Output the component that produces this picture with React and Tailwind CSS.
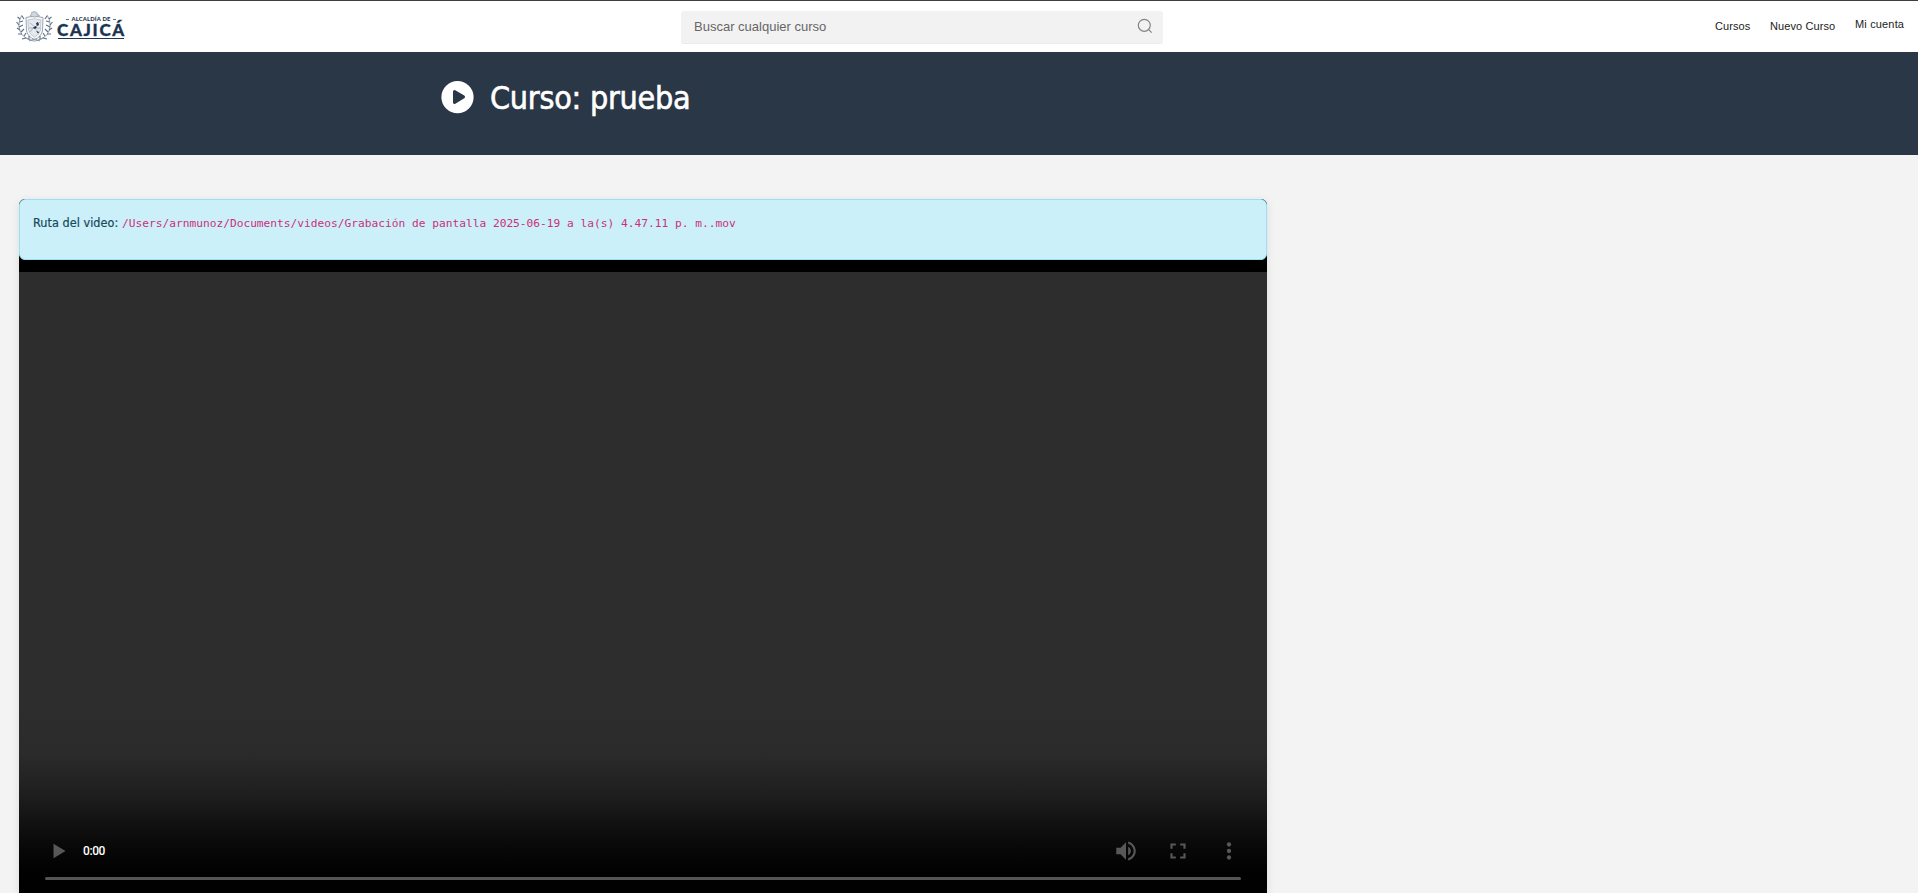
import React from "react";

function Crest() {
  return (
    <svg className="h-[32px] w-[37px] shrink-0" viewBox="0 0 37 32" fill="none" stroke="#8391a3">
      <path d="M10 6.5Q18 3.5 27 6.5L26.5 20Q25 26 18.5 28.5Q12 26 10.5 20Z" fill="#f6f7f9" strokeWidth="0.8" />
      <path d="M12 9Q18.500 6.500 25 9L24.500 19Q23 24 18.500 26Q14 24 12.500 19Z" fill="#e6eaee" strokeWidth="0.4" />
      <path d="M13 17h11M14 12l5 4 5-5M14 21l4-5 5 6" strokeWidth="0.6" />
      <path d="M17 17l2.500-2 1.500 1-2 2zM20 12l2-1 1 3-2 1zM20 20l3 1-1 1.500z" fill="#1d3554" stroke="none" />
      <path d="M14 5Q16 2.500 15.500 1.500Q18 0 20 1Q22 1.500 21 4Q23 3 23.500 5Q18.500 7 14 5Z" fill="#cfd6dd" strokeWidth="0.6" />
      <path d="M6 4Q1 12 4 20Q7 27 15 29M31 4Q36 12 33 20Q30 27 22 29" strokeWidth="0.9" />
      <path d="M6 5L8 8M4 8L1.500 6M3.500 11L7 10M3 14L.5 11M3 16L7 14M4 19L1 17M5 21L8 18M6 23L2 23M8 25L10 22M10 27L6 28M13 28L13 25M31 5L29 8M33 8L35.500 6M33.500 11L30 10M34 14L36.500 11M34 16L30 14M33 19L36 17M32 21L29 18M31 23L35 23M29 25L27 22M27 27L31 28M24 28L24 25" stroke="#5d6f86" strokeWidth="1.100" />
      <path d="M10 27Q18.500 33 27 27M13 30L18.500 28L24 30" strokeWidth="0.9" />
    </svg>
  );
}

function Logo() {
  return (
    <a className="flex h-full items-start pl-[16px] pt-[10px] text-[#1b3452]" href="#">
      <Crest />
      <div className="ml-[5px] mt-[4px] flex w-[66px] flex-col border-b border-[#1b3452] pb-px font-['Lato',sans-serif]">
        <span className="flex items-center justify-center gap-[2px] whitespace-nowrap text-[5.800px] font-black leading-[8px] tracking-[0.200px]">
          <i className="h-px w-[3px] bg-[#5d6f86]" />
          ALCALDÍA DE
          <i className="h-px w-[3px] bg-[#5d6f86]" />
        </span>
        <span className="-ml-px whitespace-nowrap text-[17px] font-black leading-[14px] tracking-[1.700px] [-webkit-text-stroke:0.300px_#1b3452]">CAJICÁ</span>
      </div>
    </a>
  );
}

function Header() {
  return (
    <header className="flex h-[52px] items-start border-t border-[#3f3f41] bg-white font-['Liberation_Sans',sans-serif]">
      <div className="h-full w-[681px]">
        <Logo />
      </div>
      <div className="mt-[10px] flex h-[33px] w-[482px] items-center justify-between rounded-[3px] border-b border-[#ebebeb] bg-[#f2f2f2] pl-[13px] pr-[10px]">
        <span className="text-[13px] leading-4 text-[#666]">Buscar cualquier curso</span>
        <svg className="mb-[2px] size-[16px]" viewBox="0 0 16 16" fill="none" stroke="#858585" strokeWidth="1.200">
          <circle cx="7.300" cy="7.300" r="6" />
          <path d="M11.700 11.700L14.700 14.700" />
        </svg>
      </div>
      <nav className="ml-auto flex pr-[13px] text-[11px] leading-4 text-[#222]">
        <a className="mt-[17px] w-[55px] tracking-[0.100px]" href="#">Cursos</a>
        <a className="mt-[17px] w-[85px] whitespace-nowrap tracking-[0.100px]" href="#">Nuevo Curso</a>
        <a className="mt-[15px] w-[50px] whitespace-nowrap tracking-[0.160px]" href="#">Mi cuenta</a>
      </nav>
    </header>
  );
}

function TitleBanner() {
  return (
    <div className="flex h-[103px] items-start bg-[#2a3747] pl-[441px] pt-[25px] text-white">
      <svg className="mt-[4px] size-[33px]" viewBox="0 0 33 33">
        <circle cx="16.500" cy="16.200" r="16.100" fill="white" />
        <path d="M13.500 10.500L22.500 15.900L13.500 21.500Z" fill="#2a3747" stroke="#2a3747" strokeWidth="3" strokeLinejoin="round" />
      </svg>
      <h1 className="ml-[16px] mt-px whitespace-nowrap font-['DejaVu_Sans_Condensed','DejaVu_Sans',sans-serif] text-[32px] leading-[40px] tracking-[-0.250px] [-webkit-text-stroke:0.600px_white]">
        Curso: prueba
      </h1>
    </div>
  );
}

function VideoPlayer() {
  return (
    <div className="flex h-[621px] flex-col justify-end bg-[#2d2d2d]">
      <div className="flex h-[180px] flex-col justify-end bg-[linear-gradient(to_bottom,#2d2d2d_0%,#2b2b2b_22%,#202020_43%,#111111_62%,#070707_76%,#010101_90%,#000_100%)]">
        <div className="flex h-[32px] items-center pl-[32px] pr-[25px] text-[#585858]">
          <svg className="h-[16px] w-[16px]" viewBox="0 0 16 16" fill="currentColor">
            <path d="M2.500 .7L14.500 8L2.500 15.300Z" />
          </svg>
          <span className="ml-[16px] font-['Roboto',sans-serif] text-[12px] font-medium leading-4 tracking-[-0.400px] text-white">0:00</span>
          <svg className="ml-auto size-[26px]" viewBox="0 0 24 24" fill="currentColor">
            <path d="M3 9v6h4l5 5V4L7 9H3zm13.500 3c0-1.770-1.020-3.290-2.500-4.030v8.050c1.480-.730 2.500-2.250 2.500-4.020zM14 3.230v2.060c2.890.860 5 3.540 5 6.710s-2.110 5.850-5 6.710v2.060c4.010-.910 7-4.490 7-8.770s-2.990-7.860-7-8.770z" />
          </svg>
          <svg className="ml-[26px] size-[26px]" viewBox="0 0 24 24" fill="currentColor">
            <path d="M7 14H5v5h5v-2H7v-3zm-2-4h2V7h3V5H5v5zm12 7h-3v2h5v-5h-2v3zM14 5v2h3v3h2V5h-5z" />
          </svg>
          <svg className="ml-[25px] size-[26px]" viewBox="0 0 24 24" fill="currentColor">
            <circle cx="12" cy="6" r="2" />
            <circle cx="12" cy="12" r="2" />
            <circle cx="12" cy="18" r="2" />
          </svg>
        </div>
        <div className="mx-[26px] mb-[13px] mt-[10px] h-[3px] rounded-full bg-[#555]" />
      </div>
    </div>
  );
}

export default function App() {
  return (
    <div className="flex h-[893px] w-[1918px] flex-col overflow-hidden bg-[#f3f3f3]">
      <Header />
      <TitleBanner />
      <main className="pl-[19px] pt-[44px]">
        <div className="w-[1248px] overflow-hidden rounded-t-[6px] bg-black shadow-[0_2px_8px_rgba(0,0,0,0.1)]">
          <div className="mb-[12px] flex h-[61px] items-baseline whitespace-nowrap rounded-[6px] border border-[#98e1f2] bg-[#ccf0fa] pl-[13px] pt-[13px] leading-5 text-[#17495a]">
            <span className="w-[89px] font-['DejaVu_Sans_Condensed','DejaVu_Sans',sans-serif] text-[12.500px] tracking-[0.050px] [-webkit-text-stroke:0.200px_#17495a]">Ruta del video:</span>
            <code className="font-['DejaVu_Sans_Mono',monospace] text-[11.200px] tracking-[0.008px] text-[#cb2f7b]">
              /Users/arnmunoz/Documents/videos/Grabación de pantalla 2025-06-19 a la(s) 4.47.11 p. m..mov
            </code>
          </div>
          <VideoPlayer />
        </div>
      </main>
    </div>
  );
}
